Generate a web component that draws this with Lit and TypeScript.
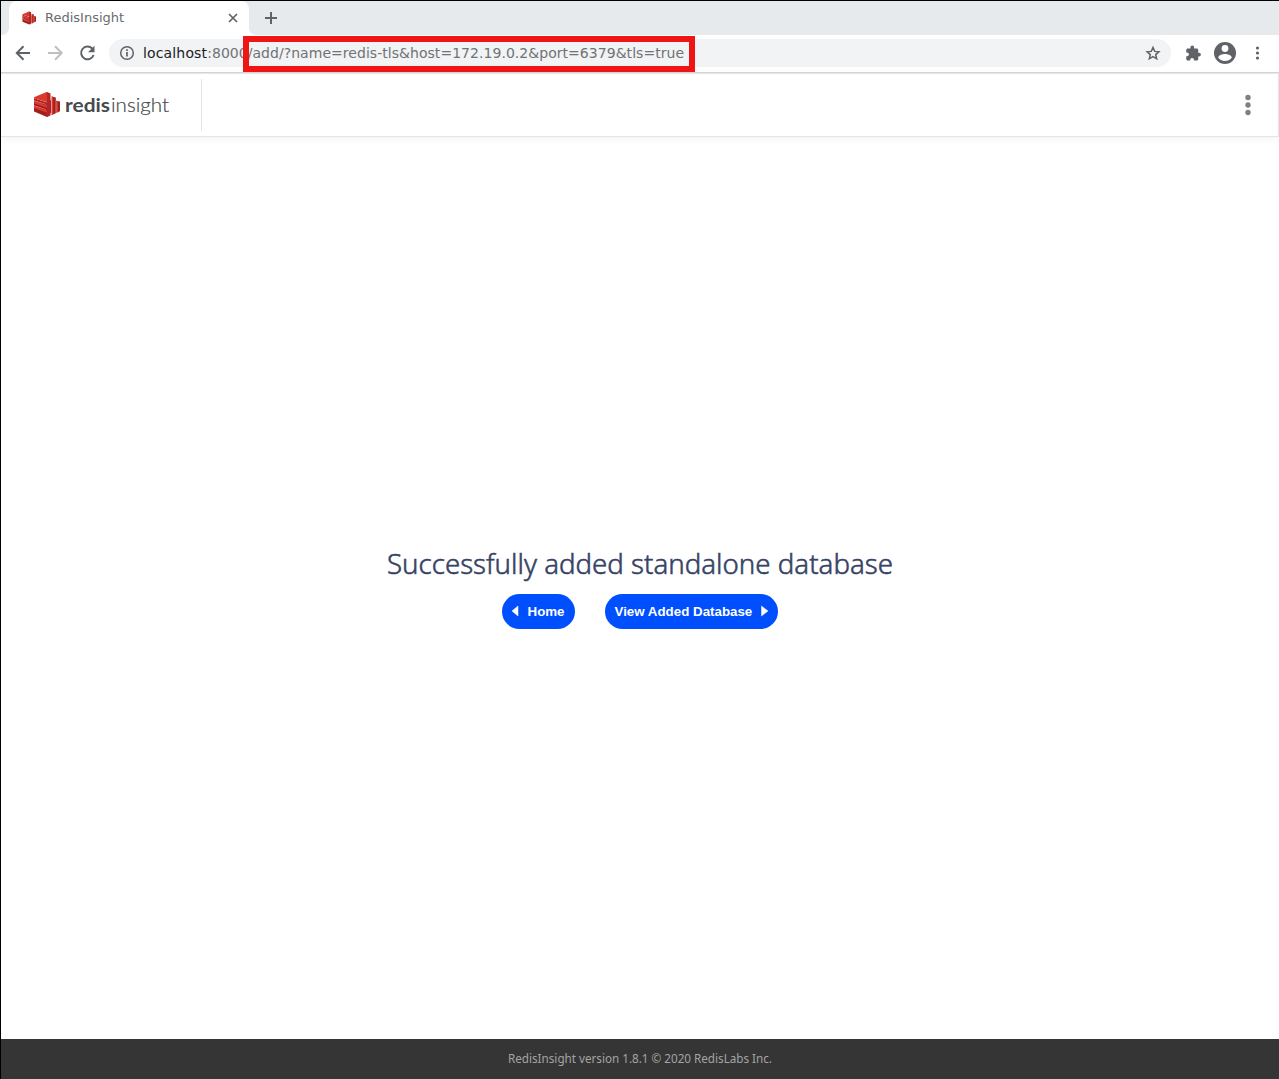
import { LitElement, html, svg, css } from "lit";
import { customElement } from "lit/decorators.js";

const fitted = (cls: string, text: string, x: number, y: number, w: number) =>
  svg`<text class=${cls} x=${x} y=${y} textLength=${w} lengthAdjust="spacingAndGlyphs">${text}</text>`;

const cubes = svg`
  <path fill="#a31f1f" d="M0 6.2 13 10.5 17 8V20.5L13 25 0 19.5Z"/>
  <path fill="#dc382c" d="M0 5.2 12.5 0 16 1.2V8L13 10.2 0 6.3Z"/>
  <path fill="#dc382c" d="M0 9 13 13.2 16 11.5V14L13 15.8 0 11.3ZM0 14 13 18.4 16 16.5V19L13 20.8 0 16Z"/>
  <path fill="#eb8f88" d="M0 8.3 12 12 12 12.6 0 9.1ZM0 13.2 12 17.2V17.8L0 14Z"/>
  <path fill="#b32623" d="M13 .2 16.5 1.6V23.4L13 25Z"/>
  <path fill="#a31f1f" d="M17.7 4.6 21.8 5.6V21.3L17.7 23ZM22.4 8.8 26 9.4V19.3L22.4 20.8Z"/>
  <path fill="#dc382c" d="M17.7 4.2 19.2 5V22.4L17.7 23ZM22.4 8.5 23.8 9.2V20.3L22.4 20.8Z"/>`;

@customElement("browser-bar")
export class BrowserBar extends LitElement {
  static styles = css`
    :host { display: block; font-family: "DejaVu Sans", sans-serif; }
    svg { display: block; flex: none; }
    .strip { display: flex; height: 34px; background: #e7eaed; }
    .edge { width: 8px; background: #fff; }
    .edge i { display: block; height: 34px; background: #e7eaed; border-radius: 0 0 7px 0; }
    .tab { display: flex; align-items: center; box-sizing: border-box; width: 240px; padding: 0 10px 0 13px; background: #fff; border-radius: 8px 8px 0 0; }
    .title { flex: 1; margin-left: 9px; font-size: 13px; line-height: 18px; color: #696b6e; }
    .after { display: flex; flex: 1; background: #fff; }
    .rest { display: flex; flex: 1; align-items: center; padding-left: 15px; background: #e7eaed; border-radius: 0 0 0 7px; }
    .tools { display: flex; align-items: center; box-sizing: border-box; height: 38px; padding: 0 13px 1px 13px; background: #fff; border-bottom: 1px solid #d5d6d8; }
    .nav { display: flex; gap: 14px; margin-right: 11px; }
    .nav svg:last-child { margin-left: -1px; margin-right: 1px; }
    .address { position: relative; display: flex; align-items: center; flex: 1; height: 28px; padding: 0 10px; border-radius: 14px; background: #f1f3f4; }
    .url { flex: 1; margin-left: 8px; font-size: 14px; line-height: 20px; letter-spacing: .04px; color: #707275; white-space: nowrap; }
    .host { color: #202124; letter-spacing: .15px; }
    .mark { position: absolute; left: 134px; top: -3px; width: 440px; height: 24px; border: 6px solid #ef1515; }
    .actions { display: flex; align-items: center; gap: 11px; margin-left: 13px; }
    .dots { margin-left: 1px; margin-right: -1px; }
  `;
  render() {
    return html`
      <div class="strip">
        <div class="edge"><i></i></div>
        <div class="tab">
          <svg width="14" height="14" viewBox="-1 0 27 25">${cubes}</svg>
          <span class="title">RedisInsight</span>
          <svg width="12" height="12" viewBox="0 0 12 12"><path d="M2 2l8 8M10 2l-8 8" stroke="#5f6368" stroke-width="1.7"/></svg>
        </div>
        <div class="after"><div class="rest">
          <svg width="14" height="14" viewBox="0 0 14 14"><path d="M7 1v12M1 7h12" stroke="#5f6368" stroke-width="2"/></svg>
        </div></div>
      </div>
      <div class="tools">
        <div class="nav">
          <svg width="18" height="18" viewBox="0 0 18 18" fill="none" stroke="#5f6368" stroke-width="2"><path d="M16 9H3.500M9.500 2.300 2.800 9l6.700 6.700"/></svg>
          <svg width="18" height="18" viewBox="0 0 18 18" fill="none" stroke="#bdbfc1" stroke-width="2"><path d="M2 9h13M9 2.300 15.700 9l-6.700 6.700"/></svg>
          <svg width="20" height="18" viewBox="-1 0 20 18"><path d="M14.200 4.500A6.400 6.400 0 1 0 15.600 11" fill="none" stroke="#5f6368" stroke-width="2"/><path d="M16.500 1.800V8.200H10Z" fill="#5f6368"/></svg>
        </div>
        <div class="address">
          <svg width="16" height="16" viewBox="0 0 16 16"><circle cx="8" cy="8" r="6.300" fill="none" stroke="#5f6368" stroke-width="1.500"/><path d="M8 7v4.500M8 4.300v1.700" stroke="#5f6368" stroke-width="1.700"/></svg>
          <span class="url"><span class="host">localhost</span>:8000/add/?name=redis-tls&amp;host=172.19.0.2&amp;port=6379&amp;tls=true</span>
          <svg width="16" height="16" viewBox="0 0 16 16"><path d="M8 2.500l1.700 3.900 4.200.4-3.200 2.800 1 4.200L8 11.600l-3.700 2.200 1-4.200-3.200-2.800 4.200-.4Z" fill="none" stroke="#5f6368" stroke-width="1.500"/></svg>
          <div class="mark"></div>
        </div>
        <div class="actions">
          <svg width="18" height="18" viewBox="0 0 24 24" fill="#5f6368"><path d="M20 11.500h-1V8c0-1.100-.9-2-2-2h-3.500V4.500a2.500 2.500 0 0 0-5 0V6H5c-1.100 0-2 .9-2 2v3.300h1a2.500 2.500 0 0 1 0 5H3V20c0 1.100.9 2 2 2h3.300v-1a2.500 2.500 0 0 1 5 0v1H17c1.100 0 2-.9 2-2v-3.500h1a2.500 2.500 0 0 0 0-5z"/></svg>
          <svg width="24" height="24" viewBox="0 0 24 24"><circle cx="12" cy="12" r="11" fill="#5f6368"/><circle cx="12" cy="7.500" r="3.400" fill="#fff"/><path d="M5.200 16.500C6 13.800 9.500 13 12 13s6 .8 6.800 3.500C17.500 18.600 15 20 12 20s-5.500-1.400-6.800-3.500Z" fill="#fff"/></svg>
          <svg class="dots" width="18" height="18" viewBox="0 0 18 18" fill="#5f6368"><circle cx="8.500" cy="4" r="1.600"/><circle cx="8.500" cy="9" r="1.600"/><circle cx="8.500" cy="14" r="1.600"/></svg>
        </div>
      </div>`;
  }
}

@customElement("app-root")
export class AppRoot extends LitElement {
  static styles = css`
    :host { display: flex; flex-direction: column; box-sizing: border-box; width: 100vw; height: 100vh; padding: 1px 0 0 1px; overflow: hidden; background: linear-gradient(#fff, #fff) content-box, #000; }
    svg { display: block; flex: none; overflow: visible; }
    .header { display: flex; align-items: center; box-sizing: border-box; height: 64px; background: #fff; border: 1px solid #e5e5e5; border-width: 1px 1px 1px 0; box-shadow: 0 2px 8px rgba(0, 0, 0, .05); }
    .brand { box-sizing: border-box; width: 201px; height: 52px; padding: 13px 0 0 32px; border-right: 1px solid #e4e4e4; }
    .menu { margin-left: auto; margin-right: 24px; }
    .main { flex: 1; display: flex; flex-direction: column; align-items: center; justify-content: center; padding-bottom: 2px; }
    .buttons { display: flex; gap: 30px; margin-top: 4px; }
    .button { display: flex; align-items: center; box-sizing: border-box; height: 35px; padding: 0 9.500px; border: 0; border-radius: 18px; background: #004fff; color: #fff; font: bold 13.333px/15px "Liberation Sans", sans-serif; white-space: nowrap; }
    .home { width: 73px; gap: 9px; }
    .view { width: 173px; gap: 9px; }
    .footer { display: flex; justify-content: center; height: 40px; background: #353535; }
    .heading { font: 300 27.700px "Noto Sans", sans-serif; fill: #364364; stroke: #364364; stroke-width: .55px; }
    .bold { font: 700 19.500px Lato, "Noto Sans", sans-serif; fill: #47494c; }
    .light { font: 300 19.500px Lato, "Noto Sans", sans-serif; fill: #47494c; stroke: #47494c; stroke-width: .2px; }
    .version { font: 11.800px "Noto Sans", sans-serif; fill: #a4a4a4; }
  `;
  render() {
    return html`
      <browser-bar></browser-bar>
      <div class="header">
        <div class="brand">
          <svg width="140" height="30" viewBox="0 0 140 30">
            <g transform="translate(1 0)">${cubes}</g>
            ${fitted("bold", "redis", 32, 20, 45)}
            ${fitted("light", "insight", 78, 20, 58)}
          </svg>
        </div>
        <svg class="menu" width="12" height="24" viewBox="0 0 12 24" fill="#808080"><circle cx="6" cy="4.500" r="2.700"/><circle cx="6" cy="12" r="2.700"/><circle cx="6" cy="19.500" r="2.700"/></svg>
      </div>
      <div class="main">
        <svg width="530" height="44" viewBox="0 0 530 44">${fitted("heading", "Successfully added standalone database", 12, 28, 506)}</svg>
        <div class="buttons">
          <button class="button home"><svg width="7" height="12" viewBox="0 0 7 12"><path d="M6 1v10L0 6Z" fill="#fff" stroke="#fff" stroke-width=".5"/></svg>Home</button>
          <button class="button view">View Added Database<svg width="7" height="12" viewBox="0 0 7 12"><path d="M.5 1v10L7 6Z" fill="#fff" stroke="#fff" stroke-width=".5"/></svg></button>
        </div>
      </div>
      <div class="footer">
        <svg width="290" height="40" viewBox="0 0 290 40">${fitted("version", "RedisInsight version 1.8.1 © 2020 RedisLabs Inc.", 13, 24, 264)}</svg>
      </div>`;
  }
}
